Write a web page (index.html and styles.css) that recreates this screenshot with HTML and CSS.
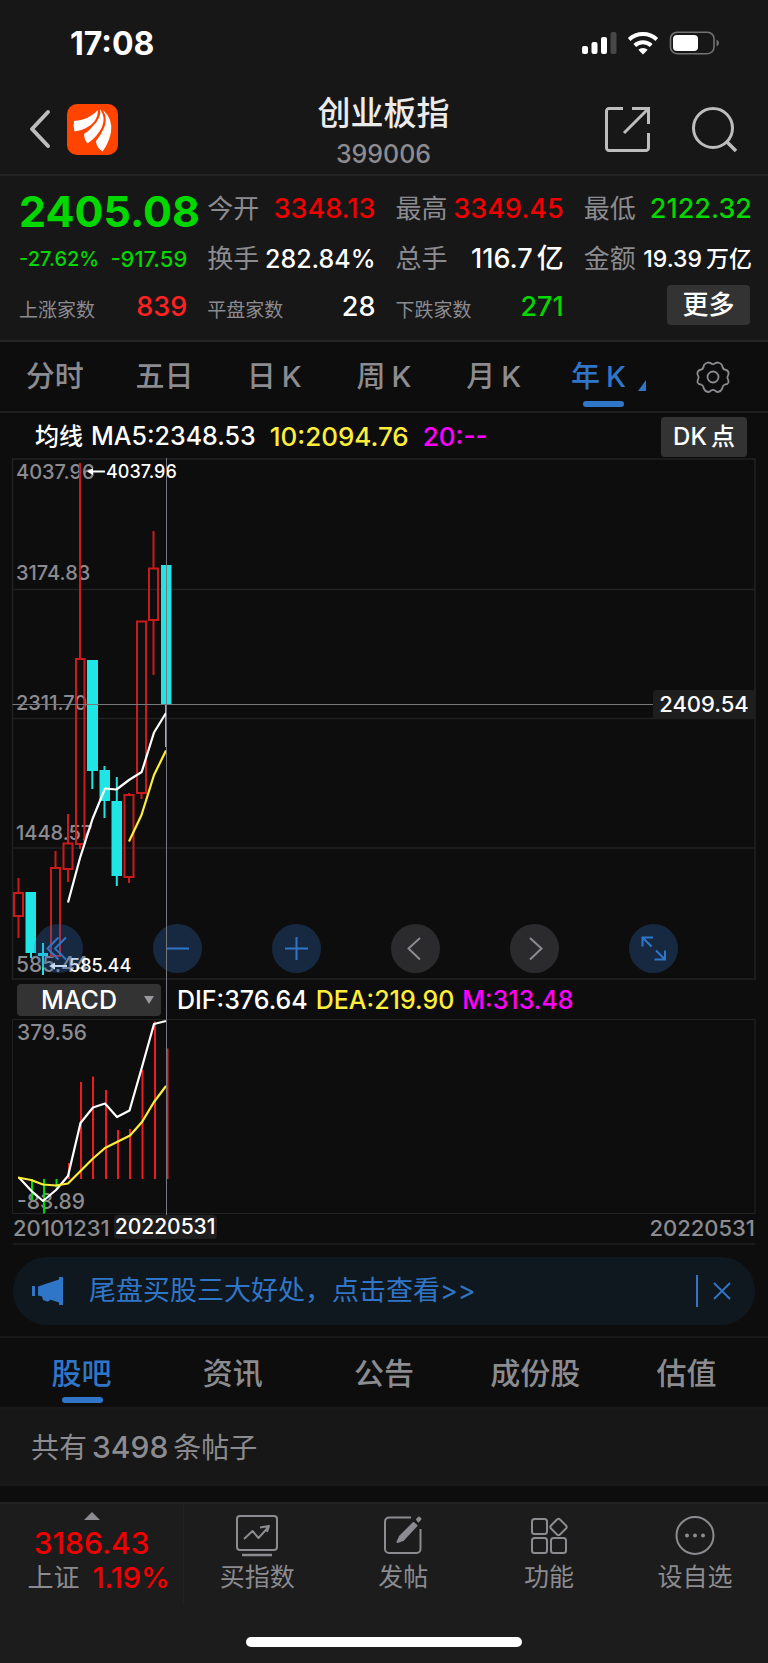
FILE: index.html
```html
<!DOCTYPE html>
<html lang="zh-CN">
<head>
<meta charset="utf-8">
<meta name="viewport" content="width=device-width, initial-scale=1">
<title>创业板指 399006</title>
<link rel="stylesheet" href="styles.css">
</head>
<body>
<header class="top">
  <div class="status">
    <span class="clock">17:08</span>
    <svg class="status-icons" width="140" height="26" viewBox="0 0 140 26" aria-hidden="true">
      <g fill="#fff">
        <rect x="2" y="15" width="6" height="8" rx="2"/>
        <rect x="11.500" y="11" width="6" height="12" rx="2"/>
        <rect x="21" y="6" width="6" height="17" rx="2"/>
        <rect x="30.500" y="1" width="6" height="22" rx="2" fill="#474747"/>
        <path d="M63 23.500l-4.700-4.700a6.800 6.800 0 0 1 9.400 0z"/>
      </g>
      <g fill="none" stroke="#fff" stroke-width="4">
        <path d="M54.800 14.400a12.400 12.400 0 0 1 16.400 0"/>
        <path d="M49.200 8.400a20.500 20.500 0 0 1 27.600 0"/>
      </g>
      <rect x="90.500" y="1.200" width="43.500" height="21.500" rx="6.500" fill="none" stroke="#737373" stroke-width="1.600"/>
      <rect x="93" y="4" width="25" height="16" rx="4" fill="#fff"/>
      <path d="M136.500 8.500q2.500 1 2.500 3.500t-2.500 3.500z" fill="#737373"/>
    </svg>
  </div>
  <div class="titlebar">
    <div class="title-left">
      <button class="icon-btn" type="button" aria-label="返回">
        <svg width="22" height="40" viewBox="0 0 22 40"><path d="M19 3L3 20l16 17" fill="none" stroke="#bdbdbd" stroke-width="4" stroke-linecap="round" stroke-linejoin="round"/></svg>
      </button>
      <svg class="logo" width="51" height="51" viewBox="0 0 51 51" aria-hidden="true">
        <rect width="51" height="51" rx="10" fill="#ff4400"/>
        <g fill="#fff">
          <path d="M7 17Q22 16 31 6Q31 18 19 24Q14 27 7.500 27.500Q6 22 7 17z"/>
          <path d="M33 5Q35 13 26 22Q22 27 17 30Q17 35 20.500 39.500Q31 32 35 23Q39 13 33 5z"/>
          <path d="M36 6Q41 15 37 24Q34 31 29 37Q29 43 35.500 47.500Q42 39 44 28Q46 15 36 6z"/>
        </g>
      </svg>
    </div>
    <div class="title-mid">
      <h1>创业板指</h1>
      <span class="code">399006</span>
    </div>
    <div class="title-right">
      <button class="icon-btn" type="button" aria-label="分享">
        <svg width="47" height="47" viewBox="0 0 47 47" fill="none" stroke="#bdbdbd" stroke-width="3"><path d="M19 2.500H5a2.500 2.500 0 0 0-2.500 2.500v37A2.500 2.500 0 0 0 5 44.500h37a2.500 2.500 0 0 0 2.500-2.500V27M28 2.500h16.500V18M44 3L20 27"/></svg>
      </button>
      <button class="icon-btn" type="button" aria-label="搜索">
        <svg width="47" height="47" viewBox="0 0 47 47" fill="none" stroke="#bdbdbd" stroke-width="3"><circle cx="22" cy="22" r="19.500"/><path d="M35 35l10 10" stroke-width="3.500"/></svg>
      </button>
    </div>
  </div>
</header>

<section class="quote">
  <div class="cell"><strong class="price down">2405.08</strong></div>
  <div class="cell"><span class="lbl">今开</span><span class="num up">3348.13</span></div>
  <div class="cell"><span class="lbl">最高</span><span class="num up">3349.45</span></div>
  <div class="cell"><span class="lbl">最低</span><span class="num down">2122.32</span></div>
  <div class="cell"><span class="chg down">-27.62%</span><span class="chg diff down">-917.59</span></div>
  <div class="cell"><span class="lbl">换手</span><span class="num mid">282.84%</span></div>
  <div class="cell"><span class="lbl">总手</span><span class="num">116.7<span class="unit">亿</span></span></div>
  <div class="cell"><span class="lbl">金额</span><span class="num small">19.39<span class="unit">万亿</span></span></div>
  <div class="cell"><span class="lbl tiny">上涨家数</span><span class="num count-num bright">839</span></div>
  <div class="cell"><span class="lbl tiny">平盘家数</span><span class="num count-num">28</span></div>
  <div class="cell"><span class="lbl tiny">下跌家数</span><span class="num count-num down">271</span></div>
  <div class="cell end"><button class="chip more" type="button">更多</button></div>
</section>

<nav class="periods">
  <button type="button">分时</button>
  <button type="button">五日</button>
  <button type="button">日<span class="k">K</span></button>
  <button type="button">周<span class="k">K</span></button>
  <button type="button">月<span class="k">K</span></button>
  <button type="button" class="active">年<span class="k">K</span><svg class="corner" width="8" height="11" viewBox="0 0 8 11"><path d="M8 0v11H0z" fill="#3076c8"/></svg></button>
  <button type="button" aria-label="设置">
    <svg width="34" height="34" viewBox="0 0 34 34" fill="none" stroke="#8b8b90" stroke-width="1.800" stroke-linejoin="round"><circle cx="17" cy="17" r="5.500"/><path d="M12 2.500q2.500 0 3.500 1.200q1.500.8 3 0Q19.500 2.500 22 2.500q2.500.7 4 2.500q.6 4 2.500 4.500q3.500.7 4 3q.2 1.600-.3 2.500q-1.400 2-.4 4q1 1.500.6 3.500q-.8 2-3.400 2q-2.500.8-2.700 4q-1.300 2.800-4.300 3.500q-2 0-3-1.500q-2-1.200-4 0q-1 1.500-3 1.500q-3-.7-4.300-3.500q-.2-3.200-2.700-4q-2.600 0-3.400-2q-.4-2 .6-3.500q1-2-.4-4q-.5-.9-.3-2.500q.5-2.300 4-3Q7.400 9 8 5q1.500-1.800 4-2.500z"/></svg>
  </button>
</nav>

<div class="ma">
  <span>均线<span class="ma5">MA5:2348.53</span></span>
  <span class="ma-val yellow">10:2094.76</span>
  <span class="ma-val magenta">20:--</span>
  <button class="chip dk" type="button">DK<span class="unit">点</span></button>
</div>

<section class="chart">
  <div class="main-plot">
    <svg class="plot" viewBox="0 458 768 522" role="img" aria-label="年K线图">
      <g fill="none" stroke="#222224" stroke-width="1.500">
        <path d="M12.500 459H755V979H12.500zM12.500 589.500H755M12.500 718.500H755M12.500 848H755"/>
      </g>
      <g class="axis">
        <text x="16" y="479">4037.96</text>
        <text x="16" y="580">3174.83</text>
        <text x="16" y="710">2311.70</text>
        <text x="16" y="840">1448.57</text>
        <text x="16" y="972" class="axis-lg">585.44</text>
      </g>
      <g fill="none" stroke="#cb1a1a" stroke-width="2">
        <path d="M14 893h9v23h-9zM18.500 878v15M18.500 916v22"/>
        <path d="M51 868h9v88h-9zM55.500 851v17"/>
        <path d="M63.500 843.500h9V869h-9zM68 814v29M68 869v13"/>
        <path d="M76 659h8.500v185H76zM80 463v196M80 844v5"/>
        <path d="M124.500 795h9v82h-9zM129 793v2M129 877v6"/>
        <path d="M137 621.500h9V793h-9zM141.500 793v6"/>
        <path d="M149 568.500h9V620h-9zM153.500 531v37M153.500 620v55"/>
      </g>
      <g fill="#1fe5e5">
        <path d="M25.500 892H36v61h-4v5h-2v-5h-4.500z"/>
        <path d="M42 943h2v10h4v3h-4v19h-2v-19h-4v-3h4z"/>
        <path d="M87 660h11v111h-4.700v18h-2v-18H87z"/>
        <path d="M99.500 770h4v-4h2v4h4.500v31h-4.500v17h-2v-17h-4z"/>
        <path d="M111.500 801h4.300v-24h2v24h4.200v75h-4.200v10h-2v-10h-4.300z"/>
        <path d="M161 565h10.500v140H167v42h-2v-42h-4z"/>
      </g>
      <g fill="none" stroke-width="2.200" stroke-linejoin="round">
        <path stroke="#fff" d="M68 902.500L80 858 92.500 819 105 788.500 116.500 789.500 129 780 141.700 772 154 732.500 166 713"/>
        <path stroke="#fdee3c" d="M129 841.500L141.500 815 154 775 166 750.500"/>
      </g>
      <path d="M12.500 704.500H655" stroke="#77777c" stroke-width="1"/>
      <g fill="#fff">
        <path d="M87 471.500l6-3.500v2.500h12v2H93v2.500zM49 966l6-3.500v2.500h12v2H55v2.500z"/>
        <text class="mark" x="106" y="478">4037.96</text>
        <text class="mark" x="69" y="972">585.44</text>
      </g>
      <rect x="653" y="690" width="102" height="29" rx="4" fill="#1e1e1f"/>
      <text class="tag" x="704" y="712" text-anchor="middle">2409.54</text>
    </svg>
    <div class="controls">
      <button class="round" type="button" aria-label="最早"><svg width="49" height="49" viewBox="0 0 49 49"><path d="M24.500 13.500L13.500 24.500l11 11M32 13.500L21 24.500l11 11"/></svg></button>
      <button class="round" type="button" aria-label="缩小"><svg width="49" height="49" viewBox="0 0 49 49"><path d="M13 24.500h23"/></svg></button>
      <button class="round" type="button" aria-label="放大"><svg width="49" height="49" viewBox="0 0 49 49"><path d="M13 24.500h23M24.500 13v23"/></svg></button>
      <button class="round gray" type="button" aria-label="左移"><svg width="49" height="49" viewBox="0 0 49 49"><path d="M29 14L17.500 24.500 29 35.500"/></svg></button>
      <button class="round gray" type="button" aria-label="右移"><svg width="49" height="49" viewBox="0 0 49 49"><path d="M20 14l11.500 10.500L20 35.500"/></svg></button>
      <button class="round" type="button" aria-label="全屏"><svg width="49" height="49" viewBox="0 0 49 49"><path d="M13.500 22.500v-9h10.500M13.500 13.500l9 9M36 26.500v9H25.500M36 35.500l-9-9"/></svg></button>
    </div>
  </div>
  <div class="indicator">
    <span class="picker">
      <select aria-label="指标"><option>MACD</option></select>
      <svg class="caret" width="10" height="8" viewBox="0 0 10 8"><path d="M0 0h10L5 8z" fill="#9a9a9e"/></svg>
    </span>
    <span>DIF:376.64</span>
    <span class="yellow">DEA:219.90</span>
    <span class="magenta">M:313.48</span>
  </div>
  <svg class="plot" viewBox="0 1019 768 196" role="img" aria-label="MACD">
    <path d="M12.500 1019.500H755V1213.500H12.500z" fill="none" stroke="#222224"/>
    <g class="axis axis-lg">
      <text x="17" y="1040">379.56</text>
      <text x="17" y="1209">-83.89</text>
    </g>
    <g fill="none" stroke-width="2">
      <path stroke="#00d800" d="M32 1179v21M44 1179v34.500M56.500 1179v8.500"/>
      <path stroke="#ee1c1c" d="M69 1179v-16M81 1179v-97M93 1179v-102.500M106 1179v-89M118 1179v-49M130 1179v-50M142.500 1179v-109M155 1179v-157.500M167.500 1179v-130.500"/>
    </g>
    <g fill="none" stroke-width="2.200" stroke-linejoin="round">
      <path stroke="#fff" d="M19 1177.500L31.500 1191 43 1201 56 1190 68 1176 80.500 1123 93 1107.500 105 1103.500 117 1117 129.500 1110.500 142 1067 154 1024 166 1021"/>
      <path stroke="#fdee3c" d="M18 1177.500L31 1180 43 1184.500 56 1185.500 68 1183.500 80.500 1171 93 1158.500 105 1148 117 1142 130 1135.500 142 1122 154 1102 166 1086"/>
    </g>
  </svg>
  <div class="crosshair"></div>
</section>

<div class="dates">
  <span>20101231</span>
  <span class="cursor-date">20220531</span>
  <span class="last">20220531</span>
</div>

<div class="banner">
  <svg width="32" height="28" viewBox="0 0 32 28" aria-hidden="true"><path d="M0 9h3v10H0zM6 9.500L27 2.500V0h4v28h-4v-2.500l-9-3q-.5 2.500-3 2l-4-1.500-1-3.500-4-1z" fill="#3076c8"/></svg>
  <a href="#tips">尾盘买股三大好处，点击查看&gt;&gt;</a>
  <button class="close" type="button" aria-label="关闭"><svg width="18" height="18" viewBox="0 0 18 18"><path d="M1 1l16 16M17 1L1 17" stroke="#3076c8" stroke-width="1.800"/></svg></button>
</div>

<nav class="sections">
  <button type="button" class="active">股吧</button>
  <button type="button">资讯</button>
  <button type="button">公告</button>
  <button type="button">成份股</button>
  <button type="button">估值</button>
</nav>
<p class="posts">共有<span class="count">3498</span>条帖子</p>

<footer class="bottom">
  <div class="bar">
    <button class="index" type="button">
      <svg width="16" height="8" viewBox="0 0 16 8"><path d="M8 0l8 8H0z" fill="#8b8b90"/></svg>
      <span class="index-value">3186.43</span>
      <span class="index-row"><span>上证</span><span class="index-pct">1.19%</span></span>
    </button>
    <button class="action" type="button">
      <svg width="44" height="44" viewBox="0 0 44 44"><rect x="2" y="3" width="40" height="34" rx="3"/><path d="M9 26l8.500-8 6 7 10-11M25 14.500l9-1.500-2 6"/><path d="M7 42h30" stroke-width="2.500"/></svg>
      <span>买指数</span>
    </button>
    <button class="action" type="button">
      <svg width="44" height="44" viewBox="0 0 44 44"><path d="M30 4.500H8a4 4 0 0 0-4 4V36a4 4 0 0 0 4 4h27.500a4 4 0 0 0 4-4V16"/><path d="M32.500 10l3 2.500L22 27l-5.500 2 2.500-5.500zM36 6.500l2-2 1.500 1.500-2 2.500z" fill="#8b8b90"/></svg>
      <span>发帖</span>
    </button>
    <button class="action" type="button">
      <svg width="44" height="44" viewBox="0 0 44 44"><rect x="5" y="6" width="15" height="15" rx="2.500"/><rect x="5" y="25" width="15" height="15" rx="2.500"/><rect x="24" y="25" width="15" height="15" rx="2.500"/><path d="M30 6.500q1.500-1.500 3 0l6 6q1.500 1.500 0 3l-6 6q-1.500 1.500-3 0l-6-6q-1.500-1.500 0-3z"/></svg>
      <span>功能</span>
    </button>
    <button class="action" type="button">
      <svg width="44" height="44" viewBox="0 0 44 44"><circle cx="22" cy="22.500" r="18.500"/><g fill="#8b8b90" stroke="none"><circle cx="14" cy="22.500" r="2"/><circle cx="22" cy="22.500" r="2"/><circle cx="30" cy="22.500" r="2"/></g></svg>
      <span>设自选</span>
    </button>
  </div>
  <div class="home"></div>
</footer>
</body>
</html>
```
FILE: styles.css
```css
* { box-sizing: border-box; }

body {
  margin: 0;
  background: #0d0d0d;
  color: #fff;
  font-family: Inter, "Noto Sans CJK SC", sans-serif;
  font-size: 24px;
  font-weight: 500;
  line-height: 32px;
}

button {
  border: 0;
  padding: 0;
  margin: 0;
  background: none;
  color: inherit;
  font: inherit;
  white-space: nowrap;
}

svg { display: block; flex: none; }

.up { color: #f00000; }
.down { color: #00d800; }
.bright { color: #ff2222; }
.yellow { color: #fdee3c; }
.magenta { color: #ff00ff; }
.unit { margin-left: 4px; }

/* Status and title */
.top {
  background: #171717;
  border-bottom: 2px solid #242426;
}

.status {
  display: flex;
  align-items: center;
  justify-content: space-between;
  height: 88px;
  padding: 0 48px 0 70px;
}

.clock { font-size: 32px; font-weight: 700; }

.titlebar {
  display: grid;
  grid-template-columns: 1fr auto 1fr;
  align-items: center;
  height: 86px;
  padding: 0 30px 0 29px;
}

.title-left, .title-right {
  display: flex;
  align-items: center;
  padding-bottom: 4px;
}

.title-left { gap: 16px; }
.title-right { justify-content: flex-end; gap: 40px; }

.title-mid { text-align: center; }

.title-mid h1 {
  margin: 0;
  font-size: 33px;
  font-weight: 500;
  line-height: 46px;
  color: #ebebeb;
}

.code {
  display: block;
  font-size: 25px;
  line-height: 36px;
  color: #8b8b90;
}

/* Quote figures */
.quote {
  display: grid;
  grid-template-columns: repeat(4, minmax(0, 1fr));
  column-gap: 20px;
  grid-auto-rows: 50px;
  padding: 8px 16px 6px 19px;
  background: #171717;
  border-bottom: 2px solid #242426;
}

.cell {
  display: flex;
  align-items: center;
  justify-content: space-between;
  white-space: nowrap;
}

.cell.end { justify-content: flex-end; }
.price { padding-top: 4px; font-size: 43px; font-weight: 700; }
.lbl { font-size: 26px; font-weight: 400; color: #8b8b90; }
.lbl.tiny { font-size: 19px; padding-top: 4px; }
.num { font-size: 27px; }
.num.mid { font-size: 25px; }
.num.small { font-size: 23px; }
.count-num { padding-bottom: 4px; }
.chg { font-size: 20px; }
.chg.diff { font-size: 22px; }

.chip {
  border-radius: 4px;
  background: #333334;
}

.more {
  width: 83px;
  height: 40px;
  margin: 0 2px 8px 0;
  font-size: 26px;
}

/* Period tabs */
.periods {
  display: grid;
  grid-template-columns: repeat(7, 1fr);
  height: 71px;
  border-bottom: 2px solid #1e1e20;
  font-size: 29px;
  color: #8b8b90;
}

.periods button {
  position: relative;
  display: flex;
  align-items: center;
  justify-content: center;
}

.k { margin-left: 6px; }

.active { color: #3076c8; }
.periods .active { padding-right: 10px; }

.periods .active::after, .sections .active::after {
  content: "";
  position: absolute;
  bottom: 4px;
  left: 50%;
  width: 41px;
  height: 6px;
  margin-left: -20px;
  border-radius: 3px;
  background: #3076c8;
}

.corner { position: absolute; right: 12px; bottom: 20px; }

/* Moving averages */
.ma {
  display: flex;
  align-items: center;
  gap: 14px;
  height: 45px;
  padding: 2px 21px 0 35px;
  white-space: nowrap;
}

.ma5 { margin-left: 8px; font-size: 25px; }
.ma-val { font-size: 26px; }

.dk {
  width: 86px;
  height: 40px;
  margin-left: auto;
}

/* Charts */
.chart { position: relative; }
.main-plot { position: relative; }
.plot { width: 100%; height: auto; }
.axis { fill: #8b8b90; font-size: 20px; }
.axis-lg { font-size: 21px; }
.mark { font-size: 18px; }
.tag { fill: #fff; font-size: 22px; }

.crosshair {
  position: absolute;
  top: 0;
  bottom: 0;
  left: 21.6%;
  width: 1px;
  background: #77777f;
}

.controls {
  position: absolute;
  bottom: 7px;
  left: 4.4%;
  right: 11.7%;
  display: flex;
  justify-content: space-between;
}

.round {
  border-radius: 50%;
  background: rgba(48, 116, 199, .28);
}

.round path { fill: none; stroke: #3076c8; stroke-width: 2; }
.round.gray { background: #2b2b2d; }
.round.gray path { stroke: #8b8b90; }

.indicator {
  display: flex;
  align-items: center;
  gap: 8px;
  height: 39px;
  padding-left: 17px;
  font-size: 25px;
  white-space: nowrap;
}

.picker { position: relative; margin-right: 8px; }

.picker select {
  display: block;
  width: 144px;
  height: 32px;
  padding: 0 0 0 24px;
  border: 0;
  border-radius: 4px;
  background: #333334;
  color: #fff;
  font: inherit;
  appearance: none;
}

.caret { position: absolute; right: 7px; top: 12px; }

.dates {
  display: flex;
  align-items: flex-start;
  gap: 4px;
  height: 30px;
  margin: 0 13px;
  border-bottom: 2px solid #1a1a1c;
  font-size: 22px;
  line-height: 26px;
  color: #8b8b90;
}

.cursor-date {
  padding: 0 1px;
  border-radius: 4px;
  background: #1e1e1f;
  color: #fff;
  font-size: 21px;
  line-height: 24px;
}

.last { margin-left: auto; }

/* Promotion strip */
.banner {
  display: flex;
  align-items: center;
  height: 68px;
  margin: 12px 13px 11px;
  padding: 0 24px 0 19px;
  border-radius: 34px;
  background: #10181f;
}

.banner a {
  margin-left: 25px;
  font-size: 27px;
  font-weight: 400;
  color: #3076c8;
  text-decoration: none;
  white-space: nowrap;
}

.close {
  display: flex;
  align-items: center;
  height: 32px;
  margin-left: auto;
  padding-left: 15px;
  border-left: 2px solid #3076c8;
}

/* Section tabs */
.sections {
  display: grid;
  grid-template-columns: repeat(5, 1fr);
  height: 73px;
  padding: 0 6px;
  border-top: 2px solid #19191b;
  border-bottom: 2px solid #19191b;
  font-size: 30px;
  color: #8b8b90;
}

.sections button { position: relative; }

.posts {
  margin: 0 0 16px;
  padding: 22px 31px;
  background: #171717;
  font-size: 28px;
  font-weight: 400;
  color: #8b8b90;
}

.count { margin: 0 5px; font-size: 30px; font-weight: 500; }

/* Bottom bar */
.bottom {
  background: #1c1c1c;
  border-top: 2px solid #222224;
  padding-bottom: 17px;
  color: #8b8b90;
}

.bar {
  display: grid;
  grid-template-columns: 24fr 19fr 19fr 19fr 19fr;
  height: 100px;
}

.index {
  display: flex;
  flex-direction: column;
  align-items: center;
  padding-top: 8px;
  border-right: 1px solid #222224;
}

.index-value {
  margin: 7px 0 3px;
  font-size: 30px;
  color: #f00000;
}

.index-row {
  display: flex;
  gap: 13px;
  padding-left: 14px;
  font-size: 26px;
  font-weight: 400;
}

.index-pct { color: #f00000; font-size: 29px; font-weight: 500; }

.action {
  display: flex;
  flex-direction: column;
  align-items: center;
  gap: 4px;
  padding-top: 9px;
  font-size: 25px;
  font-weight: 400;
}

.action svg { fill: none; stroke: #8b8b90; stroke-width: 2; stroke-linejoin: round; }

.home {
  width: 36%;
  height: 10px;
  margin: 33px auto 0;
  border-radius: 5px;
  background: #fff;
}
```
